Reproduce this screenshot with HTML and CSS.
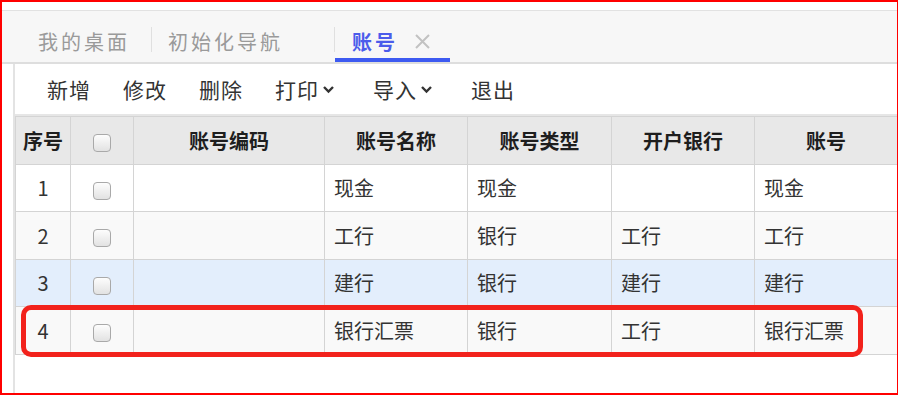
FILE: index.html
```html
<!doctype html>
<html lang="zh-CN">
<head>
  <meta charset="utf-8">
  <title>账号</title>
  <link rel="stylesheet" href="styles.css">
</head>
<body>
<div class="frame">

  <div class="tabbar">
    <span class="tab tab-first">我的桌面</span>
    <span class="tab-sep sep-1"></span>
    <span class="tab tab-second">初始化导航</span>
    <span class="tab-sep sep-2"></span>
    <span class="tab tab-active">
      <span class="tab-title">账号</span>
      <svg class="tab-close" width="17" height="15" viewBox="0 0 17 15">
        <path d="M2 1 L15 14 M15 1 L2 14" stroke="#c2c2c2" stroke-width="2" fill="none"/>
      </svg>
    </span>
  </div>

  <div class="panel">
    <div class="toolbar">
      <span class="tool">新增</span>
      <span class="tool">修改</span>
      <span class="tool">删除</span>
      <span class="tool drop">打印<svg class="caret" width="13" height="9" viewBox="0 0 13 9"><path d="M2 2 L6.5 6.5 L11 2" stroke="#333" stroke-width="2.4" fill="none"/></svg></span>
      <span class="tool drop">导入<svg class="caret" width="13" height="9" viewBox="0 0 13 9"><path d="M2 2 L6.5 6.5 L11 2" stroke="#333" stroke-width="2.4" fill="none"/></svg></span>
      <span class="tool">退出</span>
    </div>

    <table class="grid">
      <colgroup>
        <col style="width:55px">
        <col style="width:63px">
        <col style="width:191px">
        <col style="width:143px">
        <col style="width:144px">
        <col style="width:143px">
        <col style="width:143px">
      </colgroup>
      <thead>
        <tr>
          <th>序号</th>
          <th><span class="chk"></span></th>
          <th>账号编码</th>
          <th>账号名称</th>
          <th>账号类型</th>
          <th>开户银行</th>
          <th>账号</th>
        </tr>
      </thead>
      <tbody>
        <tr class="r-odd">
          <td class="num">1</td>
          <td class="c"><span class="chk"></span></td>
          <td></td>
          <td>现金</td>
          <td>现金</td>
          <td></td>
          <td>现金</td>
        </tr>
        <tr class="r-even">
          <td class="num">2</td>
          <td class="c"><span class="chk"></span></td>
          <td></td>
          <td>工行</td>
          <td>银行</td>
          <td>工行</td>
          <td>工行</td>
        </tr>
        <tr class="r-hover">
          <td class="num">3</td>
          <td class="c"><span class="chk"></span></td>
          <td></td>
          <td>建行</td>
          <td>银行</td>
          <td>建行</td>
          <td>建行</td>
        </tr>
        <tr class="r-even">
          <td class="num">4</td>
          <td class="c"><span class="chk"></span></td>
          <td></td>
          <td>银行汇票</td>
          <td>银行</td>
          <td>工行</td>
          <td>银行汇票</td>
        </tr>
      </tbody>
    </table>
  </div>

  <div class="mark"></div>
</div>
</body>
</html>
```

FILE: styles.css
```css
html, body { margin: 0; padding: 0; background: #fff; }
body { font-family: "Noto Sans CJK SC", "Microsoft YaHei", sans-serif; color: #333; }

.frame {
  position: relative;
  width: 898px;
  height: 395px;
  box-sizing: border-box;
  border-top: 2px solid #ff0000;
  border-left: 2px solid #ff0000;
  border-right: 1px solid #ff0000;
  border-bottom: 2px solid #ff0000;
  padding-top: 8px;
  display: flex;
  flex-direction: column;
  overflow: hidden;
}

/* tabs */
.tabbar {
  display: flex;
  height: 54px;
  box-sizing: border-box;
  border-top: 1px solid #e2e2e2;
  border-bottom: 2px solid #dedede;
  background: #f7f7f7;
  font-size: 20px;
  line-height: 28px;
  flex: none;
}
.tab {
  display: flex;
  align-items: center;
  padding-top: 14px;
  border-bottom: 4px solid transparent;
  letter-spacing: 3px;
  color: #9a9a9a;
  white-space: nowrap;
}
.tab-first { margin-left: 36px; }
.tab-second { margin-left: 16px; }
.tab-sep {
  align-self: center;
  margin-top: 6px;
  width: 1px;
  height: 25px;
  background: #e0e0e0;
}
.sep-1 { margin-left: 21px; }
.sep-2 { margin-left: 51px; }
.tab-active {
  padding-left: 17px;
  padding-right: 19px;
  border-bottom-color: #3d5af1;
  color: #4b5ceb;
  font-weight: bold;
}
.tab-close { margin-left: 16px; }

/* panel */
.panel {
  flex: 1;
  margin-left: 11px;
  border-left: 2px solid #e3e3e3;
  overflow: hidden;
}
.toolbar {
  display: flex;
  align-items: center;
  height: 52px;
  box-sizing: border-box;
  border-bottom: 2px solid #e6e6e6;
  padding-left: 32px;
  font-size: 21px;
  letter-spacing: 1px;
  color: #333;
}
.tool { margin-right: 32px; display: flex; align-items: center; white-space: nowrap; }
.drop { margin-right: 38px; }
.caret { margin-left: 3px; margin-top: 1px; }

/* grid */
.grid {
  width: 882px;
  table-layout: fixed;
  border-collapse: collapse;
  font-size: 20px;
}
.grid th, .grid td {
  border: 1px solid #d4d4d4;
  padding: 0 0 0 9px;
  height: 46.5px;
  text-align: left;
  white-space: nowrap;
  overflow: hidden;
}
.grid th {
  background: #e8e8e8;
  color: #1e1e1e;
  font-weight: bold;
  text-align: center;
  padding: 0;
}
.grid td.num, .grid td.c { text-align: center; padding: 0; }
.r-odd td { background: #fff; }
.r-even td { background: #f9f9f9; }
.r-hover td { background: #e3eefc; }

.chk {
  display: inline-block;
  vertical-align: middle;
  width: 16px;
  height: 16px;
  border: 1px solid #a9a9a9;
  border-radius: 4px;
  background: linear-gradient(#fdfdfd, #e2e2e2);
}

/* annotation */
.mark {
  position: absolute;
  left: 19px;
  top: 303px;
  width: 842px;
  height: 52px;
  box-sizing: border-box;
  border: 5px solid #f2221c;
  border-radius: 10px;
}
```
